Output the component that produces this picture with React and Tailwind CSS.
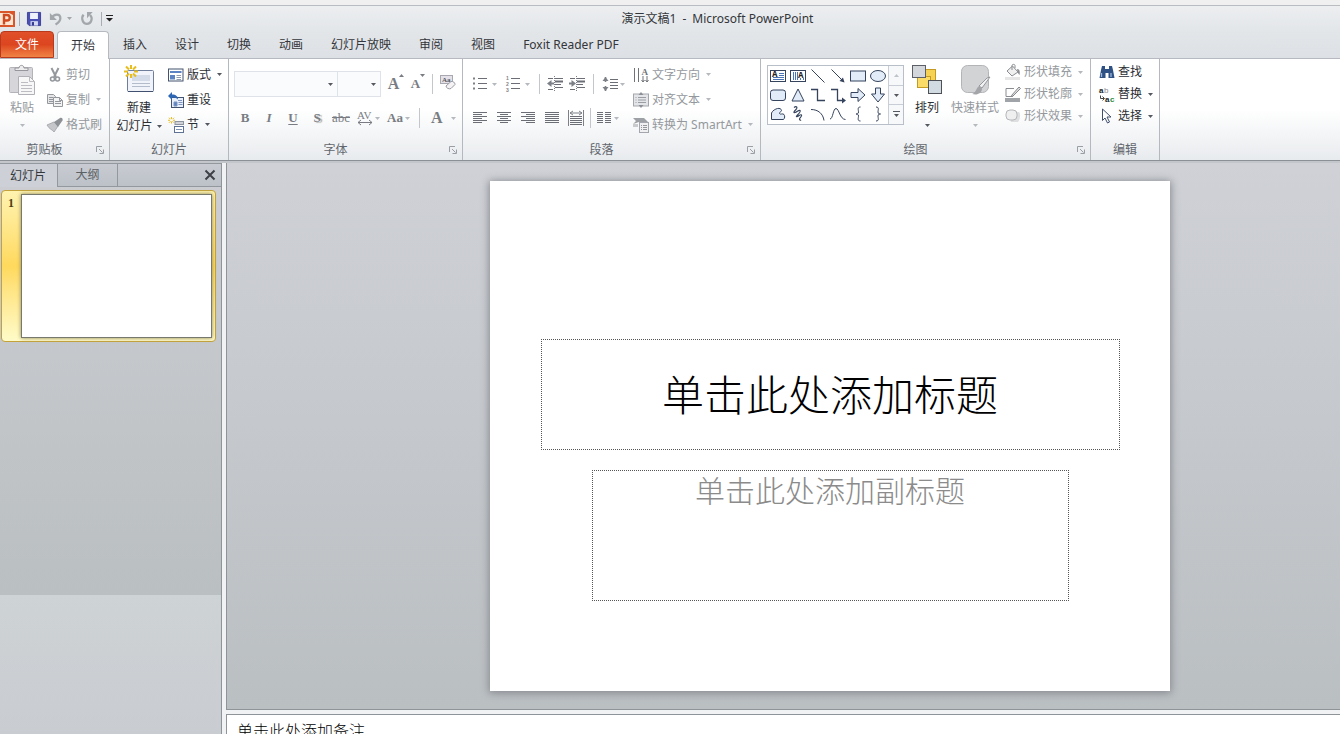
import React, { useState } from "react";
import clsx from "clsx";

const tabs = ["开始", "插入", "设计", "切换", "动画", "幻灯片放映", "审阅", "视图", "Foxit Reader PDF"];

/* ---------- small shared pieces ---------- */

function Arrow({ className = "" }) {
  return (
    <svg viewBox="0 0 5 3" className={clsx("h-[3px] w-[5px] shrink-0", className)} fill="currentColor">
      <path d="M0 0h5L2.500 3z" />
    </svg>
  );
}

function Icon({ children, className = "size-4" }) {
  return (
    <svg viewBox="0 0 16 16" className={clsx("shrink-0 overflow-visible", className)} fill="none" stroke="currentColor" strokeWidth="1">
      {children}
    </svg>
  );
}

function Sep({ className = "w-3" }) {
  return (
    <span className={clsx("flex h-5 justify-center", className)}>
      <span className="w-px bg-[#c3c7cc]" />
    </span>
  );
}

function Group({ label, launcher, className, children }) {
  return (
    <section className={clsx("flex shrink-0 flex-col border-r border-[#b4b9c0]", className)} aria-label={label}>
      <div className="flex flex-1">{children}</div>
      <div className="flex h-5 items-center">
        <span className="flex-1 text-center text-[#61666d]">{label}</span>
        {launcher && (
          <button className="flex w-5 justify-end pr-[5px] text-[#9a9fa6]" aria-label={label + "选项"}>
            <svg viewBox="0 0 8 8" className="size-2" fill="none" stroke="currentColor">
              <path d="M.5 6V.5H6M3 3l3.500 3.500M7.500 3.500v4h-4" />
            </svg>
          </button>
        )}
      </div>
    </section>
  );
}

// One icon + label line of the ribbon
function Item({ icon, text, arrow, disabled, className = "h-[25px]" }) {
  return (
    <button
      disabled={disabled}
      className={clsx("flex items-center gap-[3px] whitespace-nowrap", disabled ? "text-[#94989d]" : "text-[#2b2e33]", className)}
    >
      {icon}
      <span>{text}</span>
      {arrow && <Arrow className={clsx("ml-[3px]", disabled ? "text-[#b5b9be]" : "text-[#55595f]")} />}
    </button>
  );
}

function BigButton({ icon, text, disabled, className }) {
  return (
    <button
      disabled={disabled}
      className={clsx("flex flex-col items-center pt-[5px] leading-[18px]", disabled ? "text-[#94989d]" : "text-[#2b2e33]", className)}
    >
      {icon}
      <span className="mt-[3px]">{text}</span>
      <span className="flex h-4 items-center">
        <Arrow className={disabled ? "text-[#b5b9be]" : "text-[#55595f]"} />
      </span>
    </button>
  );
}

/* ---------- title bar ---------- */

function TitleBar() {
  return (
    <header className="flex h-[26px] items-center border-t border-[#b9bdc1] bg-linear-to-b from-[#eceef0] to-[#e3e6e9]">
      <div className="mr-[95px] flex flex-1 items-center">
        <svg viewBox="0 0 16 18" className="h-[18px] w-4">
          <rect x="-2" y="1" width="17" height="16" fill="#d9562b" />
          <path d="M0 3h9l4 2v10H0z" fill="#fde6d4" />
          <path d="M4 14.500V5h3a2.500 2.500 0 0 1 0 5.500H4" fill="none" stroke="#cf4a20" strokeWidth="2.400" />
        </svg>
        <span className="ml-[3px] h-3.5 w-px bg-[#a9adb3]" />
        <button className="ml-[7px]" aria-label="保存">
          <Icon className="size-[14px]">
            <path d="M.5 .5h15v15H2.500L.5 13.500z" fill="#4a4fb4" stroke="#35398f" />
            <path d="M3.500 1h9v7h-9z" fill="#eef3fb" stroke="none" />
            <path d="M4 10.500h8.500v5H4z" fill="#d5daf2" stroke="none" />
            <path d="M5.500 11.500h2.500v4H5.500z" fill="#35398f" stroke="none" />
          </Icon>
        </button>
        <button disabled className="ml-2 flex items-center gap-1 text-[#a3a7ac]" aria-label="撤消">
          <Icon className="size-[14px]">
            <path d="M1 1v8h8z" fill="currentColor" stroke="none" />
            <path d="M3 7C6 1.500 13 2 13 7c0 3.500-2 5-5.500 7.500" strokeWidth="2.600" />
          </Icon>
          <Arrow />
        </button>
        <button disabled className="ml-2 text-[#a3a7ac]" aria-label="重复">
          <Icon className="size-[14px]">
            <path d="M4 3C1 7 3 13.500 8 13.500S15 7 11.500 3.500" strokeWidth="2.600" />
            <path d="M8 0h6.500L8 7z" fill="currentColor" stroke="none" />
          </Icon>
        </button>
        <span className="ml-[7px] h-3.5 w-px bg-[#a9adb3]" />
        <button className="ml-1 text-[#222]" aria-label="自定义快速访问工具栏">
          <svg viewBox="0 0 7 7" className="size-[7px]" fill="currentColor">
            <path d="M0 0h7v1H0zM0 3h7L3.500 6.500z" />
          </svg>
        </button>
      </div>
      <h1 className="text-[#33363a]">
        <span>演示文稿1</span>
        <span className="mx-1.5">-</span>
        <span>Microsoft PowerPoint</span>
      </h1>
      <div className="flex-1" />
    </header>
  );
}

function TabBar({ active, onSelect }) {
  return (
    <nav className="flex h-[28px] border-b border-[#b6bac0] bg-linear-to-b from-[#e3e6e9] to-[#dde0e4]">
      <button className="w-[54px] rounded-t-sm border border-[#b8391b] bg-linear-to-b from-[#e0502a] via-[#dc451f] to-[#f08345] text-white">
        文件
      </button>
      <div className="flex pl-[3px]">
        {tabs.map((tab) => (
          <button
            key={tab}
            onClick={() => onSelect(tab)}
            className={clsx(
              "-mb-px rounded-t-sm px-[13px]",
              tab === active ? "border border-b-0 border-[#b6bac0] bg-white text-[#33363a]" : "border border-transparent text-[#33363a]"
            )}
          >
            {tab}
          </button>
        ))}
      </div>
    </nav>
  );
}

/* ---------- ribbon groups ---------- */

function ClipboardGroup() {
  return (
    <Group label="剪贴板" launcher className="w-[110px]">
      <BigButton
        disabled
        text="粘贴"
        className="w-11"
        icon={
          <svg viewBox="0 0 28 32" className="h-8 w-7" fill="none">
            <rect x="1.500" y="3.500" width="23" height="25" rx="1" fill="#d6d5d9" stroke="#b4b3b9" />
            <path d="M7 6.500V4h4c0-3.500 5-3.500 5 0h4v2.500z" fill="#eee" stroke="#96969c" />
            <path d="M10.500 12.500h11l5 5v13h-16z" fill="#f7f7f8" stroke="#b0b0b6" />
            <path d="M21.500 12.500v5h5M13 18.500h7M13 21.500h11M13 24.500h11M13 27.500h11" stroke="#bcbcc2" />
          </svg>
        }
      />
      <div className="flex flex-col pt-[3px] pl-[3px]">
        <Item
          disabled
          text="剪切"
          icon={
            <Icon>
              <path d="M4.500 1l4.500 9M11.500 1L7 10" strokeWidth="2" />
              <circle cx="5.500" cy="12" r="2" strokeWidth="1.600" />
              <circle cx="10.500" cy="12" r="2" strokeWidth="1.600" />
            </Icon>
          }
        />
        <Item
          disabled
          arrow
          text="复制"
          icon={
            <Icon>
              <path d="M.5 2.500h6l2 2v7h-8z" fill="#e6e6e8" />
              <path d="M2 5.500h4M2 7.500h5M2 9.500h4" />
              <path d="M6.500 5.500h6l3 3v6h-9z" fill="#f4f4f4" />
              <path d="M8 9.500h6M8 11.500h6M12.500 5.500v3h3" />
            </Icon>
          }
        />
        <Item
          disabled
          text="格式刷"
          icon={
            <Icon>
              <path d="M0 8l7-3 4 4-4 6c-1-2-5-3-7-7z" fill="#c4c6c9" stroke="#aaadb1" />
              <path d="M7 5l6-4c2-.5 3 .5 2.500 2.500L11 10z" fill="#8d9095" stroke="none" />
            </Icon>
          }
        />
      </div>
    </Group>
  );
}

function Spark() {
  return <path d="M7 0v4M7 9v4M0 6.500h4M10 6.500h4M2 1.500l3 3M12 1.500l-3 3M2 11.500l3-3M12 11.500l-3-3" stroke="#e8bd1c" strokeWidth="2" />;
}

function SlidesGroup() {
  return (
    <Group label="幻灯片" className="w-[119px]">
      <button className="flex w-[58px] flex-col items-center pt-[5px] leading-[18px] text-[#2b2e33]">
        <svg viewBox="0 0 32 32" className="size-8" fill="none">
          <rect x="4.500" y="6.500" width="26" height="21" rx="1" fill="#f0f4fa" stroke="#6f7f9b" />
          <path d="M5 27.500h25" stroke="#41506e" />
          <path d="M9 11h18v6H9z" fill="#d3dbe8" />
          <path d="M9 19.500h18M9 22.500h18" stroke="#b3bccb" />
          <g transform="translate(1 1)">
            <Spark />
          </g>
        </svg>
        <span className="mt-[3px]">新建</span>
        <span className="flex items-center gap-1 whitespace-nowrap">
          幻灯片
          <Arrow className="text-[#55595f]" />
        </span>
      </button>
      <div className="flex flex-col pt-[3px]">
        <Item
          arrow
          text="版式"
          icon={
            <Icon>
              <rect x=".5" y="2" width="14.500" height="12" fill="#fff" stroke="#43536f" />
              <path d="M2 4h11.500v2H2zM2 8h5v4.500H2z" fill="#5b83c4" stroke="none" />
              <path d="M8.500 8.500H13M8.500 10.500H13M8.500 12.500H13" stroke="#8d9bb2" />
            </Icon>
          }
        />
        <Item
          text="重设"
          icon={
            <Icon>
              <rect x="3.500" y="5.500" width="12" height="10" fill="#eaf0f9" stroke="#43536f" />
              <path d="M6 10h3v4H6zM10 8.500h4M10.500 10.500h4M10.500 12.500h4" fill="#5b83c4" stroke="#7d95bf" />
              <path d="M0 4l4-4v2.500c4 0 6 2 6 5C8.500 6 7 5.500 4 5.500V8z" fill="#2d66b5" stroke="none" />
            </Icon>
          }
        />
        <Item
          arrow
          text="节"
          icon={
            <Icon>
              <rect x="7" y="4.500" width="8.500" height="3" fill="#cfd3d9" stroke="#8e949d" />
              <rect x="6.500" y="9.500" width="9" height="6" fill="#fff" stroke="#5d7294" />
              <path d="M8 12.500h6" stroke="#7f93b5" />
              <g transform="scale(.5)">
                <Spark />
              </g>
            </Icon>
          }
        />
      </div>
    </Group>
  );
}

function FontSelect({ label, className }) {
  return (
    <label className={clsx("relative flex h-[26px] items-center border border-[#dfe3e9] bg-[#fafbfd]", className)}>
      <select aria-label={label} className="h-full w-full appearance-none bg-transparent outline-none">
        <option></option>
      </select>
      <Arrow className="pointer-events-none absolute right-1 text-[#55595f]" />
    </label>
  );
}

function FontGroup() {
  const letter = "flex h-6 w-6 items-center justify-center";
  return (
    <Group label="字体" launcher className="w-[234px]">
      <div className="flex flex-col gap-2 pt-3 pl-1 font-['Liberation_Serif','Noto_Sans_CJK_SC',serif] font-bold text-[#797d83]">
        <div className="flex h-[26px] items-center">
          <FontSelect label="字体" className="ml-px w-[104px]" />
          <FontSelect label="字号" className="w-[43px] border-l-0" />
          <button disabled className="ml-1 flex w-[22px] items-start justify-center text-[16px] leading-5" aria-label="增大字号">
            <span>A</span>
            <Arrow className="rotate-180" />
          </button>
          <button disabled className="flex w-[22px] items-start justify-center text-[13px] leading-5" aria-label="减小字号">
            <span>A</span>
            <Arrow />
          </button>
          <Sep className="w-[7px]" />
          <button disabled className="flex w-6 justify-center" aria-label="清除格式">
            <Icon className="-mt-1 size-4">
              <rect x=".5" y="1.500" width="12" height="8" fill="#e4e2e8" stroke="#a9a7b0" />
              <text x="2" y="8" fontSize="7" fill="#55585e" stroke="none">Aa</text>
              <path d="M6 12l5-4.500c2-.5 4 1 4 3l-4 4c-2 1-5-.5-5-2.500z" fill="#f4f2f4" stroke="#9a9aa0" />
            </Icon>
          </button>
        </div>
        <div className="flex h-[26px] items-center text-[13px]">
          <button disabled className={letter}>B</button>
          <button disabled className={clsx(letter, "italic")}>I</button>
          <button disabled className={clsx(letter, "underline underline-offset-2")}>U</button>
          <button disabled className={clsx(letter, "[text-shadow:2px_1px_1px_#aaa]")}>S</button>
          <button disabled className={clsx(letter, "font-normal line-through")}>abc</button>
          <button disabled className="flex w-[30px] items-center gap-0.5 pl-1" aria-label="字符间距">
            <Icon>
              <text x="0" y="9" fontSize="11" fill="currentColor" stroke="none" className="font-normal">AV</text>
              <path d="M1 12.500h14M4 10l-3 2.500L4 15M12 10l3 2.500-3 2.500" />
            </Icon>
            <Arrow className="text-[#b5b9be]" />
          </button>
          <button disabled className="flex w-[30px] items-center gap-0.5 pl-1">
            Aa
            <Arrow className="text-[#b5b9be]" />
          </button>
          <Sep />
          <button disabled className="flex w-9 items-center gap-2 pl-1.5 text-[16px]">
            A
            <Arrow className="text-[#b5b9be]" />
          </button>
        </div>
      </div>
    </Group>
  );
}

// Text lines drawn with a given path, used by all the alignment buttons
function Lines({ d, children }) {
  return (
    <Icon>
      <path d={d} stroke="#6b6f75" />
      {children}
    </Icon>
  );
}

function ParagraphGroup() {
  const cell = "flex w-6 justify-center";
  return (
    <Group label="段落" launcher className="w-[298px]">
      <div className="flex w-[169px] flex-col gap-2 pt-3 pl-[5px] text-[#7d8187]">
        <div className="flex h-[26px] items-center">
          <button disabled className="flex w-[33px] items-center gap-1 pl-1" aria-label="项目符号">
            <Lines d="M6 2.500h9M6 7.500h9M6 12.500h9">
              <path d="M1 1.500h2v2H1zM1 6.500h2v2H1zM1 11.500h2v2H1z" fill="currentColor" stroke="none" />
            </Lines>
            <Arrow className="text-[#b5b9be]" />
          </button>
          <button disabled className="flex w-[33px] items-center gap-1 pl-1 font-['Liberation_Sans',sans-serif] font-bold" aria-label="编号">
            <Lines d="M6 2.500h9M6 7.500h9M6 12.500h9">
              <text x="1" y="4" fontSize="5" fill="currentColor" stroke="none">1</text>
              <text x="1" y="10" fontSize="5" fill="currentColor" stroke="none">2</text>
              <text x="1" y="16" fontSize="5" fill="currentColor" stroke="none">3</text>
            </Lines>
            <Arrow className="text-[#b5b9be]" />
          </button>
          <Sep className="w-[10px]" />
          <button disabled className="flex w-[22px] justify-center" aria-label="减少缩进量">
            <Lines d="M1 2.500h5M8 2.500h8M8 8.500h6M1 13.500h5M8 11.500h8">
              <path d="M8 5.500h8" strokeWidth="2" stroke="#6b6f75" />
              <path d="M2 7.500h5" strokeWidth="2" />
              <path d="M4.500 4v7L0 7.500z" fill="currentColor" stroke="none" />
              <path d="M7.500 0v16" strokeDasharray="1 1" />
            </Lines>
          </button>
          <button disabled className="flex w-[22px] justify-center" aria-label="增加缩进量">
            <Lines d="M1 2.500h5M8 2.500h8M8 8.500h6M1 13.500h5M8 11.500h8">
              <path d="M8 5.500h8" strokeWidth="2" stroke="#6b6f75" />
              <path d="M0 7.500h4" strokeWidth="2" />
              <path d="M2.500 4v7L7 7.500z" fill="currentColor" stroke="none" />
              <path d="M7.500 0v16" strokeDasharray="1 1" />
            </Lines>
          </button>
          <Sep className="w-[10px]" />
          <button disabled className="flex items-center gap-0.5 pl-1" aria-label="行距">
            <Lines d="M8 3.500h8M8 6.500h8M8 9.500h8M8 12.500h8">
              <path d="M3.500 1v5M3.500 10v5" strokeWidth="1.600" />
              <path d="M.5 5l3-4 3 4zM.5 11l3 4 3-4z" fill="currentColor" stroke="none" />
            </Lines>
            <Arrow className="text-[#b5b9be]" />
          </button>
        </div>
        <div className="flex h-[26px] items-center">
          <button disabled className={cell} aria-label="左对齐">
            <Lines d="M1 2.500h14M1 4.500h9M1 6.500h14M1 8.500h9M1 10.500h14M1 12.500h9" />
          </button>
          <button disabled className={cell} aria-label="居中">
            <Lines d="M1 2.500h14M4 4.500h8M1 6.500h14M4 8.500h8M1 10.500h14M4 12.500h8" />
          </button>
          <button disabled className={cell} aria-label="右对齐">
            <Lines d="M1 2.500h14M6 4.500h9M1 6.500h14M6 8.500h9M1 10.500h14M6 12.500h9" />
          </button>
          <button disabled className={cell} aria-label="两端对齐">
            <Lines d="M1 2.500h14M1 4.500h14M1 6.500h14M1 8.500h14M1 10.500h14M1 12.500h14" />
          </button>
          <button disabled className={cell} aria-label="分散对齐">
            <Lines d="M2 6.500h12M2 8.500h12M2 10.500h12M2 12.500h12M2 14.500h12">
              <path d="M.5 0v16M15.500 0v16M2 3h12M5 1L2 3l3 2M11 1l3 2-3 2" />
            </Lines>
          </button>
          <Sep className="w-1" />
          <button disabled className="flex items-center gap-0.5 pl-1" aria-label="分栏">
            <Lines d="M1 2.500h6M1 4.500h6M1 6.500h6M1 8.500h6M1 10.500h6M1 12.500h6M9 2.500h6M9 4.500h6M9 6.500h6M9 8.500h6M9 10.500h6M9 12.500h6" />
            <Arrow className="text-[#b5b9be]" />
          </button>
        </div>
      </div>
      <div className="flex flex-col pt-[3px] pl-px">
        <Item
          disabled
          arrow
          text="文字方向"
          icon={
            <Icon>
              <path d="M1.500 1v14M5.500 1v14M10 9v6M14 9v6M8.500 13l1.500 2 1.500-2M12.500 13l1.500 2 1.500-2" stroke="#6f7379" />
              <text x="8.500" y="7.500" fontSize="9" fill="#6f7379" stroke="none" className="font-['Liberation_Serif',serif] font-bold">A</text>
            </Icon>
          }
        />
        <Item
          disabled
          arrow
          text="对齐文本"
          icon={
            <Icon>
              <rect x=".5" y="2" width="15" height="12" fill="#e3e5e8" stroke="#a3a7ad" />
              <path d="M2.500 5.500h1M2.500 8h1M2.500 10.500h1M5 5.500h8M5 8h8M5 10.500h8" stroke="#9a9ea4" />
              <path d="M8 0l2.500 3h-5zM8 16l2.500-3h-5z" fill="#8d9197" stroke="none" />
            </Icon>
          }
        />
        <Item
          disabled
          arrow
          text="转换为 SmartArt"
          icon={
            <Icon>
              <path d="M0 1h11l4 4-3 2H6V5L0 7l3-3z" fill="#9da0a5" stroke="none" />
              <path d="M0 7h5v3H0z" fill="#c8cacd" stroke="none" />
              <rect x="6.500" y="5.500" width="9" height="10" fill="#f0f0f2" stroke="#a3a7ad" />
              <path d="M8 8.500h1M10 8.500h4M8 10.500h1M10 10.500h4M8 12.500h1M10 12.500h4" />
            </Icon>
          }
        />
      </div>
    </Group>
  );
}

const shapes = [
  ["文本框", <><rect x=".5" y="2.500" width="15" height="11" fill="#fff" /><text x="2" y="9" fontSize="8" fontWeight="bold" fill="#222" stroke="none">A</text><path d="M9 5.500h5M9 7.500h5M3 9.500h11M3 11.500h11" stroke="#4a76b8" /></>],
  ["垂直文本框", <><rect x=".5" y="2.500" width="15" height="11" fill="#fff" /><text x="8" y="10" fontSize="8" fontWeight="bold" fill="#222" stroke="none">A</text><path d="M3.500 4v8M5.500 4v8M7.500 4v8M10.500 10v2M13.500 10v2" stroke="#4a76b8" /></>],
  ["直线", <path d="M1.500 1.500l13 13" />],
  ["箭头", <><path d="M1.500 1.500l12 12" /><path d="M14.500 14.500l-5-1.500 3.500-3.500z" fill="currentColor" stroke="none" /></>],
  ["矩形", <rect x=".5" y="3" width="15" height="10" fill="#e2ecf8" />],
  ["椭圆", <ellipse cx="8" cy="8" rx="7.500" ry="5.500" fill="#e2ecf8" />],
  ["圆角矩形", <rect x=".5" y="3" width="15" height="10.500" rx="2.500" fill="#e2ecf8" />],
  ["三角形", <path d="M8 2l6 12H2z" fill="#e2ecf8" />],
  ["肘形连接符", <path d="M1 2.500h6.500v11H15" strokeWidth="1.300" />],
  ["肘形箭头", <><path d="M1 2.500h6.500v11H13" strokeWidth="1.300" /><path d="M12 10.500l4 3-4 3z" fill="currentColor" stroke="none" /></>],
  ["右箭头", <path d="M1 5.500h7v-4l7 6.500-7 6.500v-4H1z" fill="#e2ecf8" />],
  ["下箭头", <path d="M5.500 1v6h-4L8 15l6.500-8h-4V1z" fill="#e2ecf8" />],
  ["任意多边形", <path d="M1.500 13.500V7c1-2.500 4-4 6-4.500s4 .5 4 2-2.500 1.500-2 3 3.500-.5 4.500 1 1 3.500-.5 5z" fill="#e2ecf8" />],
  ["自由曲线", <path d="M4 1.500c2.500-2 4 0 2 2s-3 3.500-1 3 4-3 5-2-1 3-2.500 4.500-1.500 2 0 1.500 3-2.500 4-1.500-2 3-2 4 1 1.500 1.500 1" strokeWidth="1.200" />],
  ["弧形", <path d="M1 3.500c7 0 12 4 13 11" />],
  ["曲线", <path d="M0 13C3 13 3 2.500 6 2.500S10 13.500 15.500 13.500" />],
  ["左大括号", <path d="M10.500 1C7 1 8.500 4 8.500 6S7 8 6 8c1 0 2.500 0 2.500 2S7 15 10.500 15" />],
  ["右大括号", <path d="M6 1c3.500 0 2 3 2 5s1.500 2 2.500 2C9.500 8 8 8 8 10s1.500 5-2 5" />],
];

function DrawingGroup() {
  const scroll = "flex flex-1 items-center justify-center";
  return (
    <Group label="绘图" launcher className="w-[330px]">
      <div className="mt-1.5 ml-1.5 flex h-[60px] border border-[#b9bfc9] bg-white">
        <div className="grid grid-cols-6 place-content-start">
          {shapes.map(([name, drawing]) => (
            <button key={name} aria-label={name} className="flex h-[19px] w-5 items-center justify-center text-[#35435c]">
              <Icon>{drawing}</Icon>
            </button>
          ))}
        </div>
        <div className="flex w-[15px] flex-col divide-y divide-[#c9ced6] border-l border-[#c9ced6] bg-[#f6f8fa]">
          <button disabled className={clsx(scroll, "text-[#c0c4c9]")} aria-label="向上">
            <Arrow className="rotate-180" />
          </button>
          <button className={clsx(scroll, "text-[#55595f]")} aria-label="向下">
            <Arrow />
          </button>
          <button className={clsx(scroll, "text-[#55595f]")} aria-label="其他">
            <svg viewBox="0 0 7 7" className="size-[7px]" fill="currentColor">
              <path d="M0 0h7v1H0zM1 3h5L3.500 6z" />
            </svg>
          </button>
        </div>
      </div>
      <BigButton
        text="排列"
        className="w-[46px]"
        icon={
          <svg viewBox="0 0 32 32" className="size-8">
            <rect x="13.500" y="5.500" width="11" height="11" fill="#f5d154" stroke="#c59a22" />
            <rect x="6.500" y="12.500" width="13" height="11" fill="#fbdc68" stroke="#c59a22" />
            <rect x="1.500" y="1.500" width="13" height="12" fill="#d3d7dc" stroke="#5c6066" />
            <rect x="17.500" y="16.500" width="13" height="13" fill="#d3dbe2" stroke="#4d5157" />
          </svg>
        }
      />
      <BigButton
        disabled
        text={<span className="whitespace-nowrap">快速样式</span>}
        className="w-[50px]"
        icon={
          <svg viewBox="0 0 32 32" className="size-8">
            <rect x="2.500" y="1.500" width="27" height="27" rx="6" fill="#d2d3d5" stroke="#b2b4b8" />
            <path d="M31 13l-8 11-3-2 8-8z" fill="#f2f2f2" stroke="#95989c" />
            <path d="M20 22l3 2.500c0 5-5 7-10 5.500 4-1 4-6 7-8z" fill="#a3a5a9" />
          </svg>
        }
      />
      <div className="flex flex-col pt-0.5 pl-[5px]">
        <Item
          disabled
          arrow
          text="形状填充"
          className="h-[22px]"
          icon={
            <Icon>
              <path d="M7.500 2L13 8l-6 4-5-5z" fill="#f0f0f0" stroke="#898c91" />
              <path d="M7 6V1.500c0-1.500 3-1.500 3 0V4" stroke="#898c91" />
              <path d="M12 5c3 0 3 3 2.500 6-1.500-1-2-3-2.500-6z" fill="#898c91" stroke="none" />
              <path d="M0 13h15v3H0z" fill="#e6e6e6" stroke="none" />
            </Icon>
          }
        />
        <Item
          disabled
          arrow
          text="形状轮廓"
          className="h-[22px]"
          icon={
            <Icon>
              <path d="M9 2.500H1v8h7" stroke="#898c91" />
              <path d="M6.500 9.500L14 1l1.500 1.500L8 10l-2 .5z" fill="#ddd" stroke="#85888d" />
              <path d="M0 12h15v4H0z" fill="#a0a3a7" stroke="none" />
            </Icon>
          }
        />
        <Item
          disabled
          arrow
          text="形状效果"
          className="h-[22px]"
          icon={
            <Icon>
              <path d="M5 4h9c2 2 1 8-1 10H6z" fill="#dedfe1" stroke="none" />
              <rect x="1" y="2" width="11" height="10" rx="4" fill="#efefef" stroke="#b5b7bb" />
            </Icon>
          }
        />
      </div>
    </Group>
  );
}

function EditGroup() {
  return (
    <Group label="编辑" className="w-[69px]">
      <div className="flex flex-col pt-0.5 pl-2">
        <Item
          text="查找"
          className="h-[22px]"
          icon={
            <Icon>
              <path d="M3 2h3v3h4V2h3l1 4 1.500 8H9.500V9h-3v5H.5L2 6z" fill="#2f5184" stroke="none" />
              <path d="M2.500 9v4M12 9v4" stroke="#9cb7dd" strokeWidth="1.300" />
            </Icon>
          }
        />
        <Item
          arrow
          text="替换"
          className="h-[22px]"
          icon={
            <Icon className="size-4 font-['Liberation_Sans',sans-serif]">
              <text x="0" y="7" fontSize="8" fontWeight="bold" fill="#222" stroke="none">a</text>
              <text x="5" y="7" fontSize="8" fill="#8a8d92" stroke="none">b</text>
              <text x="6" y="16" fontSize="8" fontWeight="bold" fill="#222" stroke="none">a</text>
              <text x="11" y="16" fontSize="8" fontWeight="bold" fill="#2c8a3a" stroke="none">c</text>
              <path d="M1.500 9.500v3H5M3.500 10.500l2 2-2 2" stroke="#444" />
            </Icon>
          }
        />
        <Item
          arrow
          text="选择"
          className="h-[22px]"
          icon={
            <Icon>
              <path d="M3.500 1v11.500L6 10l2.500 5 2-1L8 9h4z" fill="#fff" stroke="#3f4f6d" />
            </Icon>
          }
        />
      </div>
    </Group>
  );
}

/* ---------- workspace ---------- */

function SlidePanel() {
  return (
    <aside className="flex w-[222px] shrink-0 flex-col border-r border-[#8f9499] bg-[#ccd0d4]">
      <div className="flex h-6 shrink-0 border-t border-[#93989f] bg-linear-to-b from-[#c8ccd2] to-[#bcc0c7]">
        <button className="w-[57px] bg-[#cdd1d7] pr-px text-[#33363a]">幻灯片</button>
        <button className="w-[61px] border-x border-b border-[#93989f] text-[#5b5f66]">大纲</button>
        <div className="flex flex-1 items-center justify-end border-b border-[#93989f] pr-[5px]">
          <button aria-label="关闭">
            <svg viewBox="0 0 12 12" className="size-3" stroke="#3d4147" strokeWidth="2">
              <path d="M1.500 1.500l9 9M10.500 1.500l-9 9" />
            </svg>
          </button>
        </div>
      </div>
      <div className="h-[408px] shrink-0 bg-linear-to-b from-[#cbcdd2] to-[#babfc1] pt-[3px] pr-[5px] pl-px">
        <button className="flex h-[152px] w-full rounded-sm border border-[#c3a23c] bg-linear-to-b from-[#fff3b0] via-[#ffd95c] to-[#fffbc8] py-[3px] pr-[3px]">
          <span className="w-[19px] pr-px text-[12px] leading-[18px] font-bold text-[#4b3d14] font-['Liberation_Serif',serif]">1</span>
          <span className="h-full flex-1 border border-[#77796f] bg-white shadow-[0_0_4px_#8a8458]" />
        </button>
      </div>
      <div className="flex-1 bg-linear-to-b from-[#ced3d5] to-[#c9ccd1]" />
    </aside>
  );
}

function Slide() {
  return (
    <article className="aspect-4/3 w-[680px] shrink-0 bg-white pt-[158px] font-extralight shadow-[0_1px_8px_1px_#85888d]">
      <h2 className="mx-auto flex h-[111px] w-[579px] items-center justify-center border border-dotted border-[#555] text-[42px] text-black">
        单击此处添加标题
      </h2>
      <p className="mx-auto mt-5 h-[131px] w-[477px] border border-dotted border-[#555] text-center text-[30px] leading-10 text-[#8b8b8b]">
        单击此处添加副标题
      </p>
    </article>
  );
}

export default function App() {
  const [active, setActive] = useState("开始");

  return (
    <div className="flex h-screen flex-col overflow-hidden bg-[#f0f0f0] pt-[5px] text-[12px] leading-4 font-['Noto_Sans','Noto_Sans_CJK_SC',sans-serif]">
      <TitleBar />
      <TabBar active={active} onSelect={setActive} />
      <div className="flex h-[102px] shrink-0 border-b border-[#8b9097] bg-linear-to-b from-white from-50% to-[#e8ebee]">
        <ClipboardGroup />
        <SlidesGroup />
        <FontGroup />
        <ParagraphGroup />
        <DrawingGroup />
        <EditGroup />
      </div>
      <main className="flex min-h-0 flex-1 border-t-2 border-[#c3c6cb] bg-[#f0f2f4]">
        <SlidePanel />
        <div className="ml-1 flex min-w-0 flex-1 flex-col gap-1">
          <div className="flex flex-1 items-start justify-center overflow-hidden border-b border-l border-[#8f9499] bg-linear-to-b from-[#cfd1d6] to-[#babfc2] pt-[18px] pl-[93px]">
            <Slide />
          </div>
          <textarea
            aria-label="备注"
            defaultValue="单击此处添加备注"
            className="block h-5 shrink-0 resize-none overflow-hidden border-t border-l border-[#8f9499] bg-white pt-1.5 pl-2.5 text-[16px] leading-5 font-light text-black outline-none"
          />
        </div>
      </main>
    </div>
  );
}
